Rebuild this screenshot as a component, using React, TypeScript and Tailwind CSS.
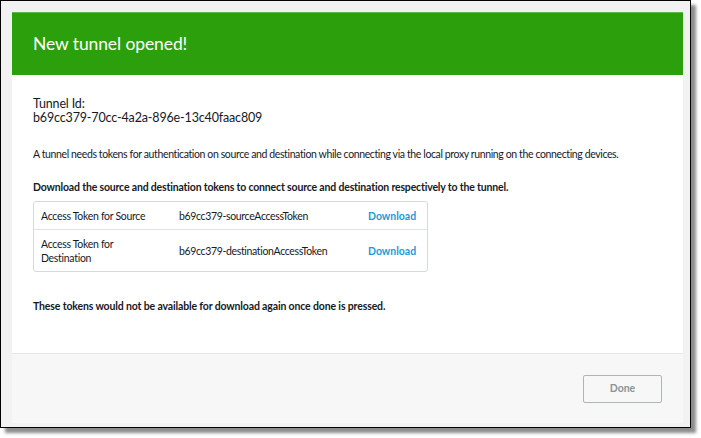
const tokens = [
  { label: 'Access Token for Source', value: 'b69cc379-sourceAccessToken' },
  { label: 'Access Token for Destination', value: 'b69cc379-destinationAccessToken' },
]

export default function App() {
  return (
    <div className="w-[701px] h-[438px] bg-white" style={{ fontFamily: 'Lato, "Noto Sans", sans-serif' }}>
      <div className="w-[691px] h-[428px] border border-black bg-[#f2f2f2] pt-[11px] pl-[11px] shadow-[5px_5px_3px_rgba(0,0,0,0.45)]">
        <div className="w-[671px] flex flex-col">
          <div className="h-[63px] bg-[#2ba00c] border-t border-[#5cb84a] flex items-center pl-[21px]">
            <h1 className="text-[17.5px] text-white tracking-[-0.1px]">New tunnel opened!</h1>
          </div>

          <div className="h-[278px] bg-white px-[21px] pt-[22px] text-[#16191f]">
            <p className="text-[12.5px] leading-[14px] tracking-[-0.15px]">Tunnel Id:</p>
            <p className="text-[12.5px] leading-[14px] tracking-[-0.15px]">b69cc379-70cc-4a2a-896e-13c40faac809</p>

            <p className="mt-[22px] text-[10.5px] leading-[14px] tracking-[-0.38px]">
              A tunnel needs tokens for authentication on source and destination while connecting via the local proxy
              running on the connecting devices.
            </p>

            <p className="mt-[19px] text-[10.5px] leading-[14px] font-bold tracking-[-0.17px]">
              Download the source and destination tokens to connect source and destination respectively to the tunnel.
            </p>

            <div className="mt-[7px] w-[395px] border border-[#d5dbdb] rounded-[3px] text-[10.5px] leading-[14px]">
              {tokens.map((t, i) => (
                <div
                  key={t.value}
                  className={`flex items-center px-[7px] ${i === 0 ? 'h-[28px] border-b border-[#e1e4e4]' : 'h-[41px]'}`}
                >
                  <span className="w-[138px] pr-[22px] tracking-[-0.3px]">{t.label}</span>
                  <span className="w-[189px] tracking-[-0.35px]">{t.value}</span>
                  <span className="font-bold text-[#1a9bd7]">Download</span>
                </div>
              ))}
            </div>

            <p className="mt-[27px] text-[10.5px] leading-[14px] font-bold tracking-[-0.14px]">
              These tokens would not be available for download again once done is pressed.
            </p>
          </div>

          <div className="h-[70px] bg-[#f7f7f7] border-t border-[#e7e7e7] flex items-center justify-end pr-[21px]">
            <button className="w-[79px] h-[28px] border border-[#aab7b8] rounded-[2px] text-[10.5px] font-bold text-[#879596] bg-[#f7f7f7]">
              Done
            </button>
          </div>
        </div>
      </div>
    </div>
  )
}
